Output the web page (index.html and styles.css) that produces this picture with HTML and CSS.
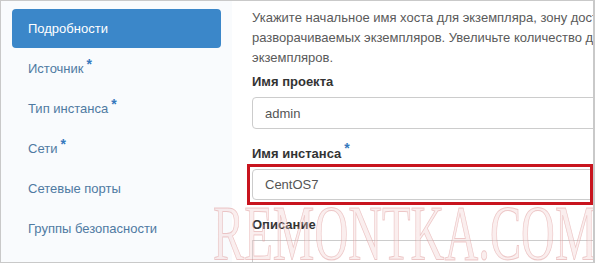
FILE: index.html
```html
<!doctype html>
<html lang="ru">
  <head>
    <meta charset="UTF-8" />
    <title>Запуск инстанса</title>
    <link rel="stylesheet" href="styles.css">
  </head>
  <body>
    <div class="frame">
      <div class="nav">
        <a class="nav-item active">Подробности</a>
        <a class="nav-item">Источник<span class="req">*</span></a>
        <a class="nav-item">Тип инстанса<span class="req">*</span></a>
        <a class="nav-item">Сети<span class="req">*</span></a>
        <a class="nav-item">Сетевые порты</a>
        <a class="nav-item">Группы безопасности</a>
      </div>
      <div class="content">
        <p class="help">Укажите начальное имя хоста для экземпляра, зону доступности, куда он будет развёрнут, и количество<br>разворачиваемых экземпляров. Увеличьте количество для создания нескольких<br>экземпляров.</p>
        <div class="group">
          <label class="label">Имя проекта</label>
          <input class="field" type="text" value="admin" readonly>
        </div>
        <div class="group">
          <label class="label">Имя инстанса<span class="req">*</span></label>
          <div class="highlight">
            <input class="field" type="text" value="CentOS7">
          </div>
        </div>
        <div class="group">
          <label class="label">Описание</label>
          <textarea class="field area"></textarea>
        </div>
      </div>
      <div class="watermark">REMONTKA.COM</div>
    </div>
  </body>
</html>
```

FILE: styles.css
```css
body {
  margin: 0;
  font-family: "Liberation Sans", Arial, sans-serif;
  font-size: 13px;
  background-color: #fff;
}

.frame {
  position: relative;
  display: flex;
  width: 595px;
  height: 263px;
  box-sizing: border-box;
  border: 1px solid #c9c9c9;
  border-right-width: 2px;
  overflow: hidden;
}

.nav {
  width: 231px;
  flex-shrink: 0;
  padding: 7px 0 0 11px;
  box-sizing: border-box;
  background-color: #f9fbfd;
}

.nav-item {
  display: flex;
  align-items: center;
  width: 209px;
  height: 39px;
  margin: 1px 0;
  padding-left: 16px;
  box-sizing: border-box;
  border-radius: 4px;
  color: #4f7aa2;
  cursor: pointer;
}

.nav-item.active {
  background-color: #3b87c9;
  color: #fff;
}

.req {
  position: relative;
  top: -5px;
  margin-left: 3px;
  color: #3579bd;
  font-weight: bold;
  font-size: 14px;
}

.content {
  flex: 1;
  min-width: 0;
  padding: 7px 0 0 20px;
  overflow: hidden;
}

.help {
  margin: 0 0 4px;
  line-height: 20px;
  white-space: nowrap;
  color: #5a5a5a;
}

.group {
  margin-bottom: 14px;
}

.label {
  display: block;
  line-height: 20px;
  margin-bottom: 5px;
  font-weight: bold;
  color: #333;
}

.field {
  display: block;
  width: 400px;
  height: 32px;
  padding: 0 12px;
  box-sizing: border-box;
  border: 1px solid #cccccc;
  border-radius: 4px;
  font-family: "Liberation Sans", Arial, sans-serif;
  font-size: 13px;
  color: #555;
  background-color: #fff;
}

.highlight {
  width: 346px;
  margin: -5px 0 -4px -5px;
  padding: 2px 0 2px 2px;
  box-sizing: border-box;
  border: 3px solid #c8141e;
  overflow: hidden;
}

.highlight .field {
  height: 31px;
}

.area {
  height: 60px;
  border-radius: 0;
  resize: none;
}

.watermark {
  position: absolute;
  left: 212px;
  top: 193px;
  font-family: "Liberation Serif", "Times New Roman", serif;
  font-size: 78px;
  line-height: 1;
  white-space: nowrap;
  color: rgba(240, 205, 205, 0.35);
  -webkit-text-stroke: 1px rgba(215, 130, 130, 0.4);
  transform: scaleX(0.6);
  transform-origin: left top;
  pointer-events: none;
}
```
